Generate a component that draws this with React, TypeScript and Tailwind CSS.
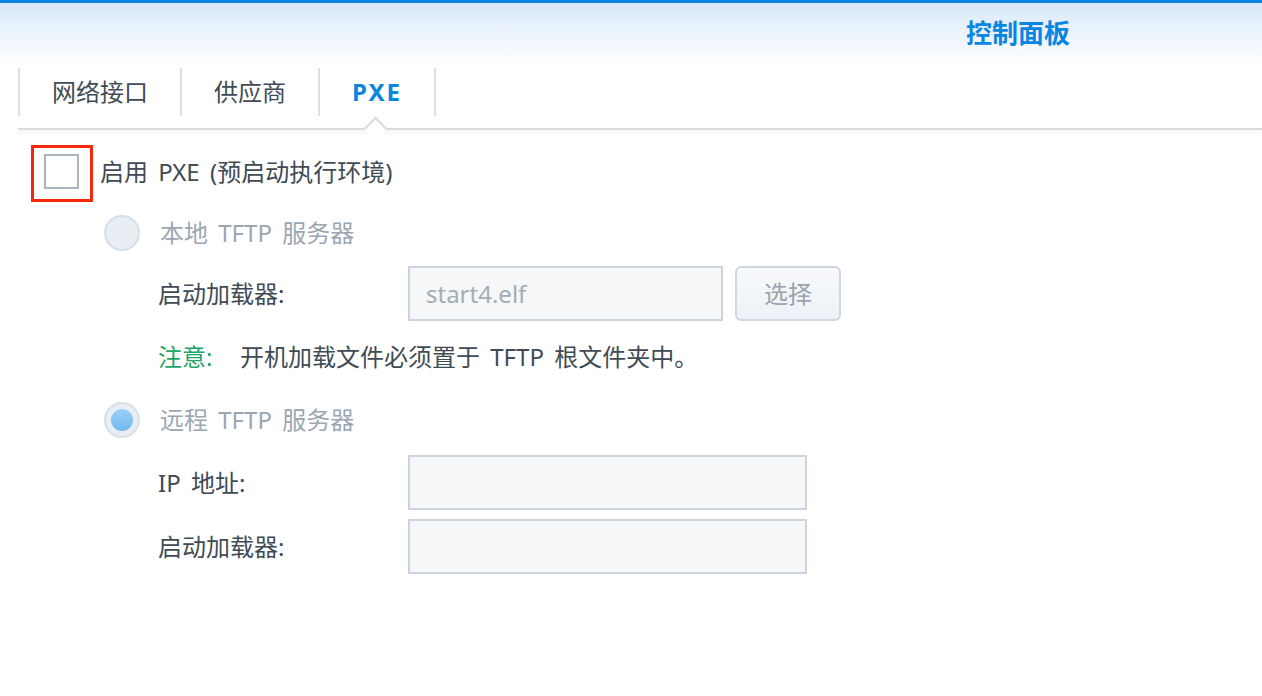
const font = "font-['Noto_Sans','Noto_Sans_CJK_SC',sans-serif]";

const Radio = ({ checked }: { checked?: boolean }) => (
  <span className="flex h-[36px] w-[36px] items-center justify-center rounded-full border-2 border-[#d6e0ea] bg-[#e9eef4]">
    {checked && (
      <span className="h-[22px] w-[22px] rounded-full bg-gradient-to-b from-[#9dd0f6] to-[#72b7ee]" />
    )}
  </span>
);

const Field = ({ width, value }: { width: string; value?: string }) => (
  <div
    className={`flex h-[55px] items-center border-2 border-[#cbd4dd] bg-[#f5f7f9] px-[16px] text-[24px] text-[#a3adb7] ${width}`}
  >
    {value}
  </div>
);

export default function App() {
  const tabs = [
    { label: "网络接口", active: false },
    { label: "供应商", active: false },
    { label: "PXE", active: true }
  ];

  return (
    <div className={`h-[696px] w-[1262px] overflow-hidden bg-white ${font}`}>
      {/* header */}
      <div className="h-[66px] border-t-[3px] border-[#0a84e2] bg-gradient-to-b from-[#d8e9f9] to-white">
        <div className="flex h-[63px] items-center justify-end pr-[192px] pb-[2px] text-[26px] font-bold text-[#0a86e0]">
          控制面板
        </div>
      </div>

      {/* tabs */}
      <div className="mt-[2px] flex h-[48px] pl-[18px]">
        {tabs.map((tab, i) => (
          <div
            key={tab.label}
            className={`flex items-center border-l-2 border-[#d6e1ec] px-[32px] text-[24px] ${
              i === tabs.length - 1 ? "border-r-2" : ""
            } ${tab.active ? "font-bold tracking-[2px] text-[#0a86e0]" : "text-[#414b55]"}`}
          >
            {tab.label}
          </div>
        ))}
      </div>

      <div className="relative ml-[18px] mt-[12px] h-[2px] bg-[#dadada] shadow-[0_2px_5px_rgba(0,0,0,0.10)]">
        <span className="absolute left-[349px] top-[-8px] h-[17px] w-[17px] rotate-45 border-l-2 border-t-2 border-[#dadada] bg-white" />
      </div>

      {/* content */}
      <div className="pl-[31px] pt-[15px] text-[24px] text-[#414b55] [word-spacing:4px]">
        <div className="flex items-center">
          <div className="h-[57px] w-[62px] border-[3px] border-[#f4290c] pl-[10px] pt-[6px]">
            <div className="h-[35px] w-[35px] border-2 border-[#abb5c0] bg-white" />
          </div>
          <span className="ml-[7px] -mt-[3px]">启用 PXE (预启动执行环境)</span>
        </div>

        <div className="ml-[73px] mt-[13px] flex items-center gap-[20px] text-[#9ba6b1]">
          <Radio />
          <span>本地 TFTP 服务器</span>
        </div>

        <div className="ml-[127px] mt-[15px] flex items-center">
          <span className="w-[250px]">启动加载器:</span>
          <Field width="w-[315px]" value="start4.elf" />
          <button
            type="button"
            className="ml-[12px] h-[55px] w-[106px] rounded-[6px] border-2 border-[#cfd8e1] bg-gradient-to-b from-[#f7f9fb] to-[#eef2f6] text-[24px] text-[#98a3ae]"
          >
            选择
          </button>
        </div>

        <div className="ml-[127px] mt-[20px] flex h-[32px] items-center">
          <span className="w-[82px] text-[#1ea466]">注意:</span>
          <span>开机加载文件必须置于 TFTP 根文件夹中。</span>
        </div>

        <div className="ml-[73px] mt-[29px] flex items-center gap-[20px] text-[#9ba6b1]">
          <Radio checked />
          <span>远程 TFTP 服务器</span>
        </div>

        <div className="ml-[127px] mt-[17px] flex items-center">
          <span className="w-[250px]">IP 地址:</span>
          <Field width="w-[399px]" />
        </div>

        <div className="ml-[127px] mt-[9px] flex items-center">
          <span className="w-[250px]">启动加载器:</span>
          <Field width="w-[399px]" />
        </div>
      </div>
    </div>
  );
}
